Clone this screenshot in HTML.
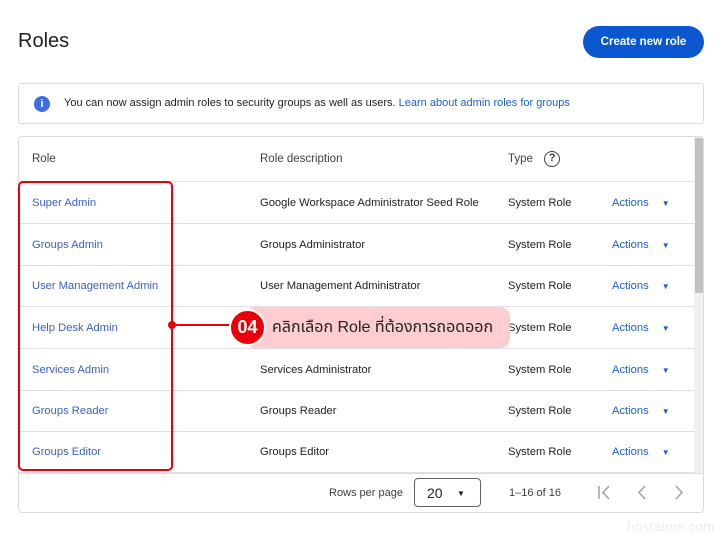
<!DOCTYPE html>
<html><head><meta charset="utf-8"><style>
*{box-sizing:border-box;margin:0;padding:0}
body{width:720px;height:537px;background:#fff;font-family:"Liberation Sans",Arial,sans-serif;position:relative;overflow:hidden;color:#202124}
.abs{position:absolute}
h1{position:absolute;left:18px;top:30px;font-size:20px;font-weight:400;color:#202124}
.btn{position:absolute;left:583px;top:26px;width:121px;height:32px;border-radius:16px;background:#0b57d0;color:#fff;font-size:11.5px;font-weight:bold;text-align:center;line-height:32px}
.info{position:absolute;left:18px;top:83px;width:686px;height:41px;border:1px solid #dadce0;border-radius:3px}
.info .ic{position:absolute;left:15px;top:12px;width:16px;height:16px;border-radius:50%;background:#3c6ee0;color:#fff;font-size:11px;font-weight:bold;text-align:center;line-height:16px}
.info .t{position:absolute;left:45px;top:13px;font-size:11px;color:#202124}
.info .t a{color:#1a5fd1;text-decoration:none}
.tbl{position:absolute;left:18px;top:136px;width:686px;height:377px;border:1px solid #dadce0;border-radius:4px;overflow:hidden}
.row{position:absolute;left:0;width:676px;border-bottom:1px solid #e0e0e0;font-size:11.2px}
.row span{position:absolute;top:50%;transform:translateY(-50%);white-space:nowrap}
.c1{left:13px;color:#3b5fc4}
.c2{left:241px}
.c3{left:489px}
.c4{left:593px;color:#1a5fd1}
.c4 i{font-style:normal;font-size:8px;margin-left:13px}
.hd span{color:#3c4043;font-size:11.5px}
.sb{position:absolute;left:675px;top:0;width:10px;height:336px;background:#f1f1f1}
.sb div{position:absolute;left:1px;top:1px;width:8px;height:155px;background:#c1c1c1}
.ft{position:absolute;font-size:11px;color:#3c4043}
</style></head><body>
<h1>Roles</h1>
<div class="btn">Create new role</div>
<div class="info"><div class="ic">i</div><div class="t">You can now assign admin roles to security groups as well as users. <a>Learn about admin roles for groups</a></div></div>
<div class="tbl">
<div class="row hd" style="top:0;height:45px"><span class="c1" style="color:#3c4043">Role</span><span class="c2">Role description</span><span class="c3">Type <b style="display:inline-block;width:16px;height:16px;border:1.6px solid #3c4043;border-radius:50%;text-align:center;font-size:11px;line-height:13px;margin-left:8px;vertical-align:middle">?</b></span></div>
<div class="row" style="top:45px;height:42px"><span class="c1">Super Admin</span><span class="c2">Google Workspace Administrator Seed Role</span><span class="c3">System Role</span><span class="c4">Actions<i>▼</i></span></div>
<div class="row" style="top:87px;height:42px"><span class="c1">Groups Admin</span><span class="c2">Groups Administrator</span><span class="c3">System Role</span><span class="c4">Actions<i>▼</i></span></div>
<div class="row" style="top:129px;height:41px"><span class="c1">User Management Admin</span><span class="c2">User Management Administrator</span><span class="c3">System Role</span><span class="c4">Actions<i>▼</i></span></div>
<div class="row" style="top:170px;height:42px"><span class="c1">Help Desk Admin</span><span class="c2">Help Desk Administrator</span><span class="c3">System Role</span><span class="c4">Actions<i>▼</i></span></div>
<div class="row" style="top:212px;height:42px"><span class="c1">Services Admin</span><span class="c2">Services Administrator</span><span class="c3">System Role</span><span class="c4">Actions<i>▼</i></span></div>
<div class="row" style="top:254px;height:41px"><span class="c1">Groups Reader</span><span class="c2">Groups Reader</span><span class="c3">System Role</span><span class="c4">Actions<i>▼</i></span></div>
<div class="row" style="top:295px;height:41px"><span class="c1">Groups Editor</span><span class="c2">Groups Editor</span><span class="c3">System Role</span><span class="c4">Actions<i>▼</i></span></div>
<div class="sb"><div></div></div>
<div class="abs" style="left:0;top:336px;width:686px;height:1px;background:#dadce0"></div>
<div class="ft" style="left:310px;top:350px">Rows per page</div>
<div class="abs" style="left:395px;top:341px;width:67px;height:29px;border:1px solid #5f6368;border-radius:4px;font-size:14px;padding:6px 0 0 12px">20<span style="font-size:8px;position:absolute;left:42px;top:10px">▼</span></div>
<div class="ft" style="left:490px;top:350px">1–16 of 16</div>
<svg class="abs" style="left:575px;top:346px" width="100" height="20" fill="none" stroke="#9aa0a6" stroke-width="1.5"><path d="M5 3v13M15 3l-6 6.5 6 6.5"/><path d="M51 3l-6 6.5 6 6.5"/><path d="M82 3l6 6.5-6 6.5"/></svg>
</div>
<div class="abs" style="left:18px;top:181px;width:155px;height:290px;border:2px solid #e8000b;border-radius:5px"></div>
<div class="abs" style="left:172px;top:324px;width:62px;height:2px;background:#e8000b"></div>
<div class="abs" style="left:168px;top:321px;width:8px;height:8px;border-radius:50%;background:#e8000b"></div>
<div class="abs" style="left:245px;top:307px;width:265px;height:41px;border-radius:10px;background:#fdcdd1"></div>
<div class="abs" style="left:229px;top:309px;width:37px;height:37px;border-radius:50%;background:#e8000b;border:2px solid #fff;color:#fff;font-weight:bold;font-size:18px;text-align:center;line-height:33px">04</div>
<div class="abs" style="left:272px;top:316px;font-size:16px;color:#222;font-family:'Liberation Sans','Noto Sans Thai','DejaVu Sans',sans-serif">คลิกเลือก Role ที่ต้องการถอดออก</div>
<div class="abs" style="left:627px;top:519px;font-size:13px;color:#ececec;letter-spacing:0.5px">hostatom.com</div>
</body></html>
